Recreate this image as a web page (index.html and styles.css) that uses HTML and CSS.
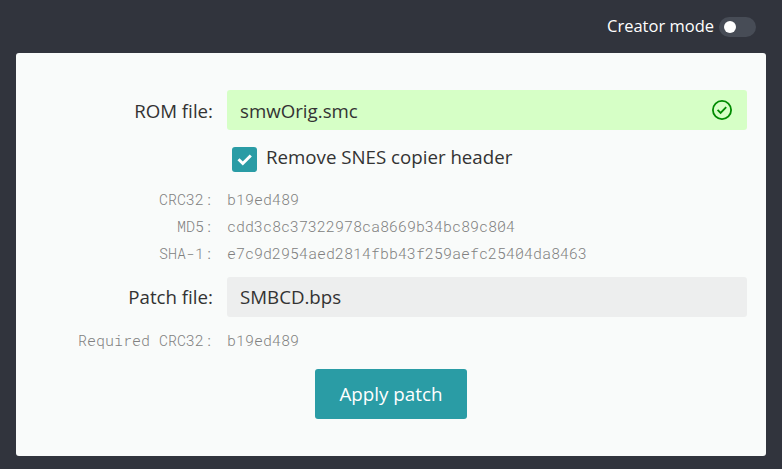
FILE: index.html
```html
<!DOCTYPE html>
<html lang="en">
<head>
<meta charset="utf-8">
<title>ROM Patcher</title>
<link rel="stylesheet" href="styles.css">
</head>
<body>
<header class="topbar">
  <span class="mode-label">Creator mode</span>
  <span class="switch"><span class="knob"></span></span>
</header>
<main class="panel">
  <div class="row file-row">
    <label class="label">ROM file:</label>
    <div class="field valid"><span>smwOrig.smc</span>
      <svg class="ok" viewBox="0 0 22 22"><circle cx="11" cy="11" r="9.1"/><path d="M6.6 10.9l3 3 5.6-5.7"/></svg>
    </div>
  </div>
  <div class="header-option">
    <span class="checkbox"><svg viewBox="0 0 25 25"><path d="M6.5 12.3l4.3 4.2 8-8"/></svg></span>
    <span class="option-text">Remove SNES copier header</span>
  </div>
  <div class="row hash"><span class="label">CRC32:</span><span class="value">b19ed489</span></div>
  <div class="row hash"><span class="label">MD5:</span><span class="value">cdd3c8c37322978ca8669b34bc89c804</span></div>
  <div class="row hash"><span class="label">SHA-1:</span><span class="value">e7c9d2954aed2814fbb43f259aefc25404da8463</span></div>
  <div class="row file-row patch">
    <label class="label">Patch file:</label>
    <div class="field"><span>SMBCD.bps</span></div>
  </div>
  <div class="row hash required"><span class="label">Required CRC32:</span><span class="value">b19ed489</span></div>
  <button class="apply" type="button">Apply patch</button>
</main>
</body>
</html>
```

FILE: styles.css
```css
* { box-sizing: border-box; }
body {
  margin: 0;
  height: 469px;
  padding: 0 16px;
  overflow: hidden;
  background: #31343d;
  font-family: "Open Sans", sans-serif;
  color: #333;
}
.topbar {
  height: 53px;
  display: flex;
  align-items: center;
  justify-content: flex-end;
  padding-right: 10px;
  gap: 5px;
  color: #fff;
  font-size: 16.5px;
}
.mode-label { padding-bottom: 2px; }
.switch {
  width: 37px;
  height: 20px;
  border-radius: 10px;
  background: #474c56;
  padding: 4px 5px;
}
.knob {
  display: block;
  width: 12px;
  height: 12px;
  border-radius: 50%;
  background: #fff;
}
.panel {
  height: 403px;
  padding: 37px 19px 0;
  border-radius: 3px;
  background: #f9fbfa;
}
.row {
  display: grid;
  grid-template-columns: 178px 520px;
  column-gap: 14px;
  align-items: center;
}
.label { text-align: right; white-space: nowrap; }
.file-row { height: 40px; font-size: 18.7px; }
.patch .label, .patch .field span { padding-bottom: 2px; }
.field {
  height: 40px;
  padding: 0 14px 0 13px;
  display: flex;
  align-items: center;
  justify-content: space-between;
  border-radius: 3px;
  background: #edeeee;
}
.valid { background: #d6ffc6; }
.ok { width: 22px; height: 22px; fill: none; stroke: #008b00; stroke-width: 1.8; }
.header-option {
  height: 56px;
  margin-left: 197px;
  display: flex;
  align-items: center;
  gap: 9px;
  font-size: 18.7px;
}
.checkbox { width: 25px; height: 25px; margin-top: 2px; border-radius: 3px; background: #2a9ca5; }
.option-text { padding-bottom: 4px; }
.checkbox svg { display: block; fill: none; stroke: #fff; stroke-width: 3; }
.hash {
  height: 27px;
  padding-bottom: 2px;
  font-family: "Roboto Mono", "Liberation Mono", monospace;
  font-size: 15px;
  font-weight: 300;
  color: #808080;
}
.patch { margin-top: 10px; }
.required { margin-top: 10px; }
.apply {
  display: block;
  width: 152px;
  height: 50px;
  margin: 15px auto 0;
  border: 0;
  border-radius: 3px;
  background: #2a9ca5;
  color: #fff;
  font: 18.8px "Open Sans", sans-serif;
}
```
